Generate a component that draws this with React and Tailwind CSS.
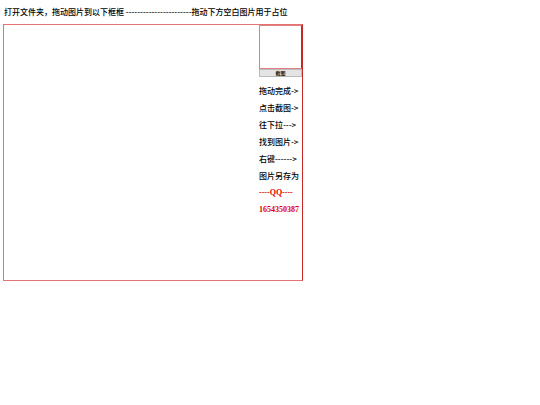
import React from 'react';

const steps = ['拖动完成->', '点击截图->', '往下拉--->', '找到图片->', '右键------>', '图片另存为'];

export default function App() {
  return (
    <div className="min-h-[405px] w-[540px] bg-white pt-[6px] font-['Noto_Sans_CJK_SC',sans-serif] font-medium text-black">
      <div className="pl-[4px] text-[8px] leading-[12px]">
        打开文件夹，拖动图片到以下框框 -----------------------拖动下方空白图片用于占位
      </div>
      <div className="ml-[3px] mt-[6px] flex h-[257px] w-[300px] justify-end border border-[#e57373] border-r-[#c62828]">
        <div className="flex w-[43px] flex-col">
          <div className="h-[44px] border border-[#e08080] border-r-[#c62828]" />
          <button className="h-[8px] border border-[#bbb] bg-[#e4e4e4] text-[5px] leading-[6px]">截图</button>
          <div className="mt-[5px] flex flex-col text-[8px] leading-[17px]">
            {steps.map((s) => (
              <div key={s} className="whitespace-nowrap">{s}</div>
            ))}
            <div className="whitespace-nowrap font-['Liberation_Serif',serif] font-bold text-[#e00000]">----QQ----</div>
            <div className="whitespace-nowrap font-['Liberation_Serif',serif] font-bold text-[#e00000]">1654350387</div>
          </div>
        </div>
      </div>
    </div>
  );
}
